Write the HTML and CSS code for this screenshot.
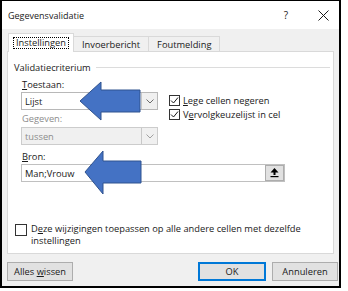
FILE: index.html
```html
<!DOCTYPE html>
<html>
<head>
<meta charset="utf-8">
<link rel="stylesheet" href="styles.css">
</head>
<body>
<div class="frame">
  <div class="titlebar">
    <span class="title">Gegevensvalidatie</span>
    <span class="help">?</span>
    <svg class="close" width="11" height="11" viewBox="0 0 11 11"><path d="M0.5 0.5 L10.5 10.5 M10.5 0.5 L0.5 10.5" stroke="#1a1a1a" stroke-width="1" fill="none"/></svg>
  </div>
  <div class="content">
    <div class="tabs">
      <div class="tab active"><span class="focus">Instellingen</span></div>
      <div class="tab">Invoerbericht</div>
      <div class="tab">Foutmelding</div>
    </div>
    <div class="panel">
      <div class="group-title"><span>Validatiecriterium</span><span class="rule"></span></div>
      <div class="criteria">
        <div class="leftcol">
          <div class="label"><u>T</u>oestaan:</div>
          <div class="combo">
            <span class="value">Lijst</span>
            <span class="drop"><svg width="8" height="5" viewBox="0 0 8 5"><path d="M0.5 0.5 L4 4 L7.5 0.5" stroke="#6d6d6d" fill="none"/></svg></span>
          </div>
          <div class="label disabled">Gegeven:</div>
          <div class="combo off">
            <span class="value">tussen</span>
            <span class="drop"><svg width="8" height="5" viewBox="0 0 8 5"><path d="M0.5 0.5 L4 4 L7.5 0.5" stroke="#a0a0a0" fill="none"/></svg></span>
          </div>
        </div>
        <div class="rightcol">
          <div class="check"><span class="box"><svg width="9" height="9" viewBox="0 0 9 9"><path d="M1 4.5 L3.5 7 L8 1.5" stroke="#1a1a1a" fill="none"/></svg></span><span><u>L</u>ege cellen negeren</span></div>
          <div class="check"><span class="box"><svg width="9" height="9" viewBox="0 0 9 9"><path d="M1 4.5 L3.5 7 L8 1.5" stroke="#1a1a1a" fill="none"/></svg></span><span>V<u>e</u>rvolgkeuzelijst in cel</span></div>
        </div>
      </div>
      <div class="label bron"><u>B</u>ron:</div>
      <div class="source">
        <span class="value">Man;Vrouw</span>
        <span class="pick"><svg width="9" height="10" viewBox="0 0 9 10"><path d="M4.5 0 L0.5 4.5 L3.5 4.5 L3.5 7 L5.5 7 L5.5 4.5 L8.5 4.5 Z" fill="#000"/><rect x="0.5" y="8" width="8" height="1.2" fill="#000"/></svg></span>
      </div>
      <div class="apply">
        <span class="box big"></span>
        <span class="apply-text">D<u>e</u>ze wijzigingen toepassen op alle andere cellen met dezelfde<br>instellingen</span>
      </div>
    </div>
    <div class="buttons">
      <div class="btn"><span>Alles <u>w</u>issen</span></div>
      <div class="spacer"></div>
      <div class="btn default"><span>OK</span></div>
      <div class="btn"><span>Annuleren</span></div>
    </div>
  </div>
  <svg class="arrows" width="348" height="291" viewBox="0 0 348 291">
    <path d="M80 101 L101 82 L101 90 L140 90 L140 112 L101 112 L101 120 Z" fill="#4472c4" stroke="#2f528f" stroke-width="1"/>
    <path d="M85 172 L103 151 L103 161 L141 161 L141 183 L103 183 L103 194 Z" fill="#4472c4" stroke="#2f528f" stroke-width="1"/>
  </svg>
</div>
</body>
</html>
```
FILE: styles.css
```css
html, body {
  margin: 0;
  padding: 0;
  background: #ffffff;
}
body {
  font-family: "Open Sans", "Noto Sans", sans-serif;
  font-size: 9.3px;
  color: #1a1a1a;
}
u {
  text-decoration: underline;
  text-underline-offset: 1px;
}
.frame {
  position: relative;
  width: 341px;
  height: 288px;
  box-sizing: border-box;
  border: 2px solid #000;
  border-top-width: 1px;
  display: flex;
  flex-direction: column;
  background: #f0f0f0;
}
.titlebar {
  height: 28px;
  background: #ffffff;
  display: flex;
  align-items: center;
  flex-shrink: 0;
}
.title {
  font-size: 9px;
  padding-left: 6px;
  flex: 1;
}
.help {
  font-size: 10px;
  margin-right: 30px;
}
.close {
  margin-right: 10px;
}
.content {
  flex: 1;
  display: flex;
  flex-direction: column;
}
.tabs {
  display: flex;
  align-items: flex-end;
  margin-left: 6px;
  margin-top: 4px;
  height: 18px;
}
.tab {
  height: 15px;
  box-sizing: border-box;
  border: 1px solid #d9d9d9;
  border-bottom: none;
  padding: 0 8px;
  display: flex;
  align-items: center;
  background: #f0f0f0;
  margin-left: -1px;
}
.tab.active {
  background: #ffffff;
  padding: 0 5px;
  position: relative;
  z-index: 1;
  margin-bottom: -1px;
  height: 19px;
  margin-left: 0;
}
.focus {
  outline: 1px dotted #000;
  padding: 0 2px;
  line-height: 10px;
}
.panel {
  height: 203px;
  box-sizing: border-box;
  margin: 0 5px 0 5px;
  background: #ffffff;
  border: 1px solid #d9d9d9;
  display: flex;
  flex-direction: column;
}
.group-title {
  display: flex;
  align-items: center;
  height: 12px;
  margin: 9px 3px 0 6px;
}
.rule {
  flex: 1;
  height: 1px;
  background: #dcdcdc;
  margin-left: 5px;
}
.criteria {
  display: flex;
  margin-top: 6px;
  padding-left: 13px;
}
.leftcol {
  width: 137px;
  display: flex;
  flex-direction: column;
}
.label {
  height: 12px;
  line-height: 12px;
  padding-left: 1px;
}
.label.disabled {
  color: #8d8d8d;
  margin-top: 3px;
}
.combo {
  height: 18px;
  box-sizing: border-box;
  border: 1px solid #b8b8b8;
  margin-top: 1px;
  display: flex;
  align-items: stretch;
  background: #ffffff;
}
.combo.off {
  background: #f0f0f0;
  border-color: #cccccc;
  color: #8d8d8d;
  margin-top: 2px;
}
.value {
  flex: 1;
  display: flex;
  align-items: center;
  padding-left: 3px;
}
.drop {
  width: 15px;
  border-left: 1px solid #c8c8c8;
  background: #f0f0f0;
  display: flex;
  align-items: center;
  justify-content: center;
}
.rightcol {
  margin-left: 11px;
  margin-top: 14px;
  display: flex;
  flex-direction: column;
}
.check {
  height: 14px;
  display: flex;
  align-items: center;
}
.box {
  width: 9px;
  height: 9px;
  border: 1px solid #333;
  background: #fff;
  display: flex;
  align-items: center;
  justify-content: center;
  margin-right: 3px;
  flex-shrink: 0;
}
.box svg {
  display: block;
}
.bron {
  margin-top: 6px;
  margin-left: 13px;
}
.source {
  height: 18px;
  box-sizing: border-box;
  width: 264px;
  margin-left: 13px;
  margin-top: 1px;
  border: 1px solid #c0c0c0;
  display: flex;
  align-items: stretch;
}
.pick {
  width: 17px;
  border: 1px solid #adadad;
  background: #e1e1e1;
  display: flex;
  align-items: center;
  justify-content: center;
}
.apply {
  margin-top: auto;
  margin-bottom: 6px;
  margin-left: 7px;
  display: flex;
  align-items: flex-start;
}
.box.big {
  width: 10px;
  height: 10px;
  margin-right: 4px;
}
.apply-text {
  line-height: 12px;
  margin-top: -1px;
}
.buttons {
  display: flex;
  margin-top: 8px;
  padding-left: 5px;
  padding-right: 1px;
  gap: 6px;
}
.spacer {
  flex: 1;
}
.btn {
  width: 66px;
  height: 19px;
  box-sizing: border-box;
  border: 1px solid #adadad;
  background: #e1e1e1;
  display: flex;
  align-items: center;
  justify-content: center;
}
.btn.default {
  border-color: #0078d7;
  box-shadow: inset 0 0 0 1px #0078d7;
  width: 68px;
}
.arrows {
  position: absolute;
  left: -2px;
  top: -1px;
  pointer-events: none;
}
```
